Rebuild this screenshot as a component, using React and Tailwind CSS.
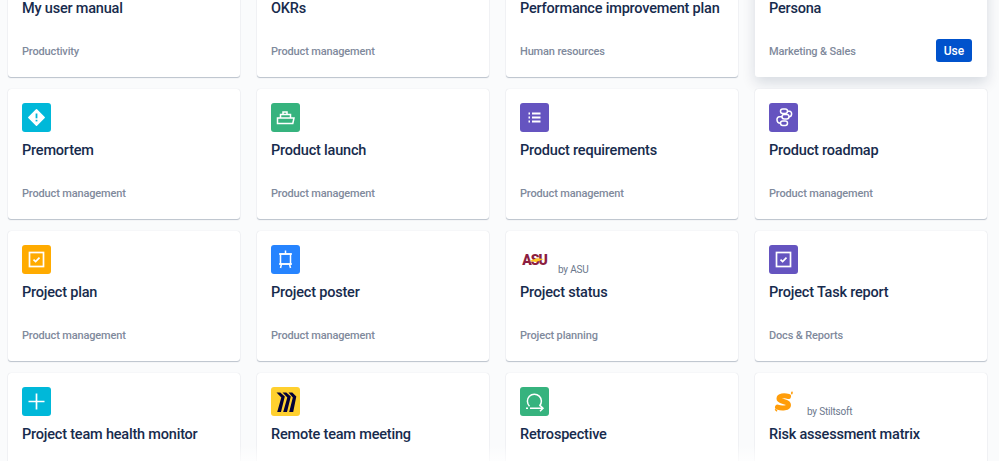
const font = { fontFamily: "Roboto, sans-serif" }

function Tile({ bg, children }) {
  return (
    <div className={`w-[29px] h-[29px] rounded-[3px] flex items-center justify-center ${bg}`}>
      <svg width="29" height="29" viewBox="0 0 29 29" fill="none" stroke="#fff" strokeWidth="1.5">
        {children}
      </svg>
    </div>
  )
}

const PremortemIcon = () => (
  <Tile bg="bg-[#00b8d9]">
    <path d="M14.5 6.8 22.2 14.5 14.5 22.2 6.8 14.5Z" fill="#fff" stroke="#fff" strokeLinejoin="round" />
    <path d="M14.5 10.5V15.3" stroke="#00b8d9" strokeWidth="1.8" />
    <path d="M14.5 16.8V18.4" stroke="#00b8d9" strokeWidth="1.8" />
  </Tile>
)

const LaunchIcon = () => (
  <Tile bg="bg-[#36b37e]">
    <path d="M6.5 15H23L21.8 20.5H6.5Z" />
    <path d="M9.5 15V11.5H19.5V15" />
    <path d="M12 11.5V9H16V11.5" />
  </Tile>
)

const ListIcon = () => (
  <Tile bg="bg-[#6554c0]">
    <path d="M12 10.5H20.5M12 14.5H20.5M12 18.5H20.5" strokeWidth="1.8" />
    <path d="M8.5 10.5H10M8.5 14.5H10M8.5 18.5H10" strokeWidth="1.8" />
  </Tile>
)

const RoadmapIcon = () => (
  <Tile bg="bg-[#6554c0]">
    <rect x="11.5" y="6" width="7" height="4.4" rx="2.2" />
    <rect x="13" y="11.6" width="7" height="4.4" rx="2.2" />
    <rect x="11.5" y="18" width="7" height="4.4" rx="2.2" />
    <path d="M18.5 8.2H20.5C23.4 8.2 23.4 13.8 20 13.8M13 13.8H10.5C7 13.8 7 20.2 11.5 20.2" />
  </Tile>
)

const CheckBoxIcon = ({ bg }) => (
  <Tile bg={bg}>
    <rect x="7.5" y="7.5" width="14" height="14" strokeWidth="1.7" />
    <path d="M11.5 14.7 13.6 16.6 17.5 12.6" strokeWidth="1.7" />
  </Tile>
)

const PosterIcon = () => (
  <Tile bg="bg-[#2684ff]">
    <rect x="9.5" y="9" width="10" height="10" />
    <path d="M14.5 5.5V9M8 9H21M8 19H21M10.5 19 9.5 23M18.5 19 19.5 23" />
  </Tile>
)

const PlusIcon = () => (
  <Tile bg="bg-[#00b8d9]">
    <path d="M14.5 6.5V22.5M6.5 14.5H22.5" strokeWidth="1.7" />
  </Tile>
)

const MiroIcon = () => (
  <div className="w-[29px] h-[29px] rounded-[3px] bg-[#ffd02f] flex items-center justify-center">
    <svg width="29" height="29" viewBox="0 0 29 29" fill="#050038">
      <path d="M5.5 5.5H9.3L13.8 9.5 10 25H6.2L10.3 10.5Z" />
      <path d="M11.5 5.5H15.3L19.8 9.5 16 25H12.2L16.3 10.5Z" />
      <path d="M17.5 5.5H21.3L25.3 9.5 22.2 25H18.2L21.8 10.5Z" />
    </svg>
  </div>
)

const RetroIcon = () => (
  <Tile bg="bg-[#36b37e]">
    <path d="M19.5 19A7 7 0 1 0 9.5 19.2" />
    <path d="M6 21.3H8M10 21.3H23M20 18.4 23 21.3 20 24.2" />
  </Tile>
)

const AsuLogo = () => (
  <div className="relative w-[29px] h-[29px] flex items-center justify-center">
    <span className="text-[14px] leading-none font-black tracking-[-1px] text-[#8c1d40]">ASU</span>
    <svg className="absolute left-[9px] top-[12px]" width="16" height="6" viewBox="0 0 16 6">
      <path d="M0 4 8 1.2 15 2 7 5Z" fill="#ffc627" />
    </svg>
  </div>
)

const StiltsoftLogo = () => (
  <div className="w-[29px] h-[29px] flex items-center justify-center">
    <svg width="20" height="22" viewBox="0 0 20 22" fill="none" stroke="#ff9d0a" strokeLinecap="round">
      <path d="M14.5 5.5C10 4.2 5 4.8 5 7.8C5 11.2 14.5 9.8 14.5 14C14.5 17.2 8 17.8 3.5 16.2" strokeWidth="5" />
      <path d="M18 1.2 17.8 2.6" strokeWidth="1.6" />
      <path d="M1.5 18.8 2.6 19.8" strokeWidth="1.4" />
    </svg>
  </div>
)

const cards = [
  { title: "My user manual", tag: "Productivity" },
  { title: "OKRs", tag: "Product management" },
  { title: "Performance improvement plan", tag: "Human resources" },
  { title: "Persona", tag: "Marketing & Sales", hovered: true },
  { title: "Premortem", tag: "Product management", icon: <PremortemIcon /> },
  { title: "Product launch", tag: "Product management", icon: <LaunchIcon /> },
  { title: "Product requirements", tag: "Product management", icon: <ListIcon /> },
  { title: "Product roadmap", tag: "Product management", icon: <RoadmapIcon /> },
  { title: "Project plan", tag: "Product management", icon: <CheckBoxIcon bg="bg-[#ffab00]" /> },
  { title: "Project poster", tag: "Product management", icon: <PosterIcon /> },
  { title: "Project status", tag: "Project planning", icon: <AsuLogo />, by: "by ASU" },
  { title: "Project Task report", tag: "Docs & Reports", icon: <CheckBoxIcon bg="bg-[#6554c0]" /> },
  { title: "Project team health monitor", icon: <PlusIcon /> },
  { title: "Remote team meeting", icon: <MiroIcon /> },
  { title: "Retrospective", icon: <RetroIcon /> },
  { title: "Risk assessment matrix", icon: <StiltsoftLogo />, by: "by Stiltsoft" },
]

function Card({ title, tag, icon, by, hovered }) {
  return (
    <div
      className={`h-[130px] bg-white rounded-[3px] px-[14px] pt-[14px] flex flex-col ${
        hovered
          ? "shadow-[0_6px_14px_rgba(9,30,66,0.14)]"
          : "shadow-[0_1px_1px_rgba(9,30,66,0.25),0_0_1px_rgba(9,30,66,0.16)]"
      }`}
    >
      <div className="h-[29px] flex items-start">
        {icon}
        {by && (
          <span className="ml-[9px] mt-[18px] text-[10px] leading-[14px] tracking-[-0.2px] text-[#6b778c]">{by}</span>
        )}
      </div>
      <h3 className="mt-[9px] text-[14.5px] leading-[20px] tracking-[-0.2px] font-medium text-[#172b4d] whitespace-nowrap">
        {title}
      </h3>
      <div className="mt-auto mb-[13px] h-[24px] flex items-center justify-between">
        <span className="text-[11px] font-medium tracking-[-0.15px] text-[#7f8a9c]">{tag}</span>
        {hovered && (
          <button className="h-[23px] w-[36px] -mt-[3px] mr-[1px] rounded-[3px] bg-[#0052cc] text-white text-[12px] font-medium">
            Use
          </button>
        )}
      </div>
    </div>
  )
}

export default function App() {
  return (
    <div style={font} className="relative h-[461px] overflow-hidden bg-[#fafbfc]">
      <div className="grid grid-cols-[232px_232px_232px_232px] gap-x-[17px] gap-y-[12px] pl-2 -mt-[53px]">
        {cards.map((card) => (
          <Card key={card.title} {...card} />
        ))}
      </div>
      <div className="absolute bottom-0 left-[210px] right-[210px] h-[16px] bg-gradient-to-t from-white/70 to-transparent" />
    </div>
  )
}
